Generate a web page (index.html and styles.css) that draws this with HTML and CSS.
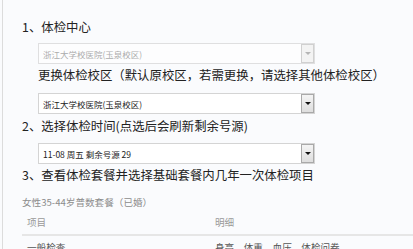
FILE: index.html
```html
<!DOCTYPE html>
<html lang="zh-CN">

<head>
    <meta charset="UTF-8">
    <title>体检预约</title>
    <link rel="stylesheet" href="styles.css">
</head>

<body>
    <div class="panel">
        <h2 class="step">1、体检中心</h2>
        <div class="picker disabled">
            <select disabled>
                <option>浙江大学校医院(玉泉校区)</option>
            </select>
            <span class="arrow"></span>
        </div>
        <p class="note">更换体检校区（默认原校区，若需更换，请选择其他体检校区）</p>
        <div class="picker">
            <select>
                <option>浙江大学校医院(玉泉校区)</option>
            </select>
            <span class="arrow"></span>
        </div>

        <h2 class="step step2">2、选择体检时间(点选后会刷新剩余号源)</h2>
        <div class="picker">
            <select>
                <option>11-08 周五 剩余号源 29</option>
            </select>
            <span class="arrow"></span>
        </div>

        <h2 class="step step3">3、查看体检套餐并选择基础套餐内几年一次体检项目</h2>
        <p class="package">女性35-44岁普数套餐（已婚）</p>
        <table class="items">
            <tr>
                <th class="col-name">项目</th>
                <th>明细</th>
            </tr>
            <tr>
                <td>一般检查</td>
                <td>身高、体重、血压、体检问卷</td>
            </tr>
        </table>
    </div>
</body>

</html>
```

FILE: styles.css
```css
body {
    margin: 0;
    background: #fafbfd;
    font-family: "Noto Sans CJK SC", "Noto Sans", sans-serif;
    color: #222;
}

.panel {
    margin-left: 2px;
    border-left: 1px solid #dcdcdc;
    min-height: 249px;
    padding: 18px 0 0 19px;
    box-sizing: border-box;
    overflow: hidden;
}

.step {
    margin: 0;
    font-size: 12.4px;
    font-weight: normal;
    line-height: 18px;
    white-space: nowrap;
}

.step2 {
    line-height: 24px;
}

.step3 {
    line-height: 22px;
}

.picker {
    position: relative;
    width: 277px;
    height: 21px;
    margin: 7px 0 0 16px;
}

.picker select {
    -webkit-appearance: none;
    appearance: none;
    display: block;
    width: 100%;
    height: 100%;
    margin: 0;
    padding: 0 0 0 4px;
    border: 1px solid #d4d4d4;
    border-radius: 0;
    background: #fff;
    font-family: "Noto Sans CJK SC", sans-serif;
    font-size: 8.5px;
    color: #222;
}

.picker .arrow {
    position: absolute;
    top: 1px;
    right: 1px;
    width: 11px;
    height: 17px;
    border: 1px solid #a9a9a9;
    background: linear-gradient(#f4f4f4, #dedede);
    pointer-events: none;
}

.picker .arrow::after {
    content: "";
    position: absolute;
    left: 3px;
    top: 7px;
    border-left: 3px solid transparent;
    border-right: 3px solid transparent;
    border-top: 3px solid #111;
}

.picker.disabled select {
    color: #8a8a8a;
    background: #fff;
}

.picker.disabled .arrow {
    border-color: #d0d0d0;
    background: #f3f3f3;
}

.picker.disabled .arrow::after {
    border-top-color: #b5b5b5;
}

.note {
    margin: 0 0 6px 16px;
    font-size: 12.4px;
    line-height: 22px;
    white-space: nowrap;
}

.step2 + .picker {
    margin-top: 5px;
}

.package {
    margin: 8px 0 0;
    font-size: 9.6px;
    line-height: 16px;
    color: #8c8c8c;
}

.items {
    width: 100%;
    border-collapse: collapse;
    font-size: 9.6px;
    color: #8c8c8c;
}

.items th,
.items td {
    padding: 0 0 0 5px;
    text-align: left;
    font-weight: normal;
    height: 22px;
}

.items th {
    height: 24px;
    border-bottom: 2px solid #e6e6e6;
    color: #999;
}

.items td {
    color: #555;
}

.col-name {
    width: 183px;
}
```
